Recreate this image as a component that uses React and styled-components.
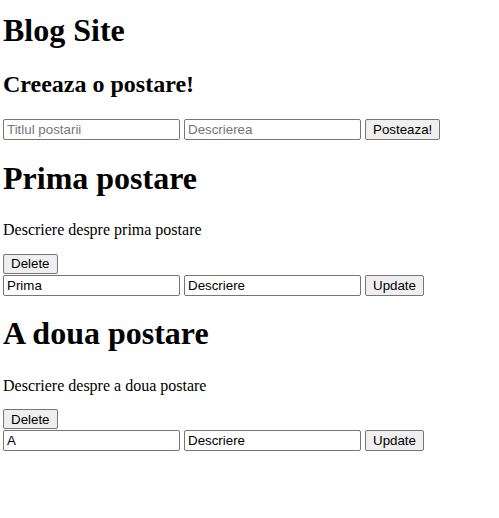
import React from "react";
import styled, { createGlobalStyle } from "styled-components";

const Global = createGlobalStyle`
  html, body { background: #fff; }
  body {
    margin: 0;
    padding: 0 3px;
    font-family: "Liberation Serif", "Times New Roman", serif;
    font-size: 16px;
    color: #000;
  }
`;

const Page = styled.div`
  display: flow-root;
`;

const Title = styled.h1`
  font-size: 32px;
  font-weight: bold;
  margin: 12px 0 0;
  line-height: 37px;
`;

const SubTitle = styled.h2`
  font-size: 24px;
  font-weight: bold;
  margin: 21px 0 0;
  line-height: 28px;
`;

const PostTitle = styled.h1`
  font-size: 32px;
  font-weight: bold;
  margin: 19.5px 0 0;
  line-height: 37px;
`;

const Text = styled.p`
  margin: 23.5px 0 0;
  line-height: 19px;
`;

const Row = styled.div`
  display: flex;
  align-items: flex-start;
  gap: 4px;
  margin-top: ${(p) => p.$mt || 0}px;
`;

const Field = styled.input`
  box-sizing: border-box;
  width: 177px;
  height: 21px;
  margin: 0;
  padding: 1px 3px;
  border: 1px solid #767676;
  border-radius: 2px;
  font-family: "Liberation Sans", Arial, sans-serif;
  font-size: 13.33px;
  color: #000;
  background: #fff;
  &::placeholder { color: #757575; }
  &:focus { outline: none; }
`;

const Btn = styled.button`
  box-sizing: border-box;
  height: ${(p) => p.$h || 21}px;
  margin: 0;
  padding: 0 7px;
  border: 1px solid #767676;
  border-radius: 2px;
  background: #efefef;
  font-family: "Liberation Sans", Arial, sans-serif;
  font-size: 13.33px;
  line-height: 15px;
  color: #000;
`;

const posts = [
  { title: "Prima postare", desc: "Descriere despre prima postare", t: "Prima", d: "Descriere" },
  { title: "A doua postare", desc: "Descriere despre a doua postare", t: "A", d: "Descriere" },
];

export default function App() {
  return (
    <Page>
      <Global />
      <Title>Blog Site</Title>
      <SubTitle>Creeaza o postare!</SubTitle>
      <Row $mt={21}>
        <Field placeholder="Titlul postarii" />
        <Field placeholder="Descrierea" />
        <Btn>Posteaza!</Btn>
      </Row>
      {posts.map((p) => (
        <div key={p.title}>
          <PostTitle>{p.title}</PostTitle>
          <Text>{p.desc}</Text>
          <Row $mt={14.5}>
            <Btn $h={20}>Delete</Btn>
          </Row>
          <Row $mt={1}>
            <Field defaultValue={p.t} />
            <Field defaultValue={p.d} />
            <Btn>Update</Btn>
          </Row>
        </div>
      ))}
    </Page>
  );
}
